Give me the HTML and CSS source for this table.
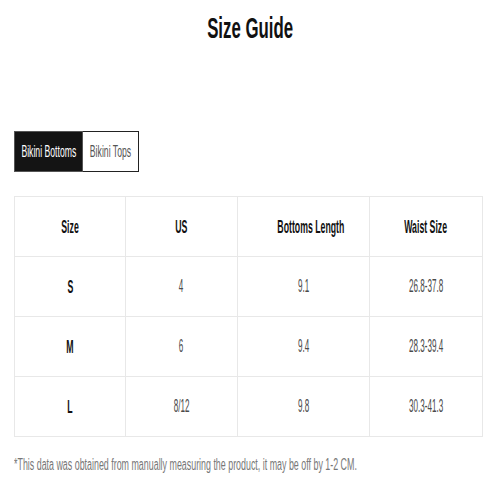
FILE: index.html
```html
<!DOCTYPE html>
<html>
<head>
<meta charset="utf-8">
<link rel="stylesheet" href="styles.css">
</head>
<body>
<div class="page">
  <h1 class="title"><span class="sq sq-title">Size Guide</span></h1>
  <div class="tabs">
    <div class="tab tab-active"><span class="sq sq-tab">Bikini Bottoms</span></div>
    <div class="tab tab-idle"><span class="sq sq-tab">Bikini Tops</span></div>
  </div>
  <table class="sizes">
    <colgroup>
      <col class="c1"><col class="c2"><col class="c3"><col class="c4">
    </colgroup>
    <thead>
      <tr>
        <th><span class="sq sq-th">Size</span></th>
        <th><span class="sq sq-th">US</span></th>
        <th><span class="sq sq-th">Bottoms Length</span></th>
        <th><span class="sq sq-th">Waist Size</span></th>
      </tr>
    </thead>
    <tbody>
      <tr>
        <td class="size"><span class="sq sq-th">S</span></td>
        <td><span class="sq sq-td">4</span></td>
        <td><span class="sq sq-td">9.1</span></td>
        <td><span class="sq sq-td">26.8-37.8</span></td>
      </tr>
      <tr>
        <td class="size"><span class="sq sq-th">M</span></td>
        <td><span class="sq sq-td">6</span></td>
        <td><span class="sq sq-td">9.4</span></td>
        <td><span class="sq sq-td">28.3-39.4</span></td>
      </tr>
      <tr>
        <td class="size"><span class="sq sq-th">L</span></td>
        <td><span class="sq sq-td">8/12</span></td>
        <td><span class="sq sq-td">9.8</span></td>
        <td><span class="sq sq-td">30.3-41.3</span></td>
      </tr>
    </tbody>
  </table>
  <p class="note"><span class="sq sq-note">*This data was obtained from manually measuring the product, it may be off by 1-2 CM.</span></p>
</div>
</body>
</html>
```
FILE: styles.css
```css
html, body {
  margin: 0;
  padding: 0;
  background: #ffffff;
}
body {
  font-family: "Liberation Sans", Arial, sans-serif;
  color: #111;
}
.page {
  width: 500px;
  height: 500px;
  padding: 11px 14px 0 14px;
  box-sizing: border-box;
  overflow: hidden;
}
.sq {
  display: inline-block;
  white-space: nowrap;
  transform-origin: center center;
}
.title {
  margin: 0;
  text-align: center;
  font-size: 29px;
  line-height: 34px;
  font-weight: bold;
  color: #111;
}
.sq-title {
  transform: scaleX(0.58);
}
.tabs {
  display: flex;
  margin-top: 86px;
  height: 41px;
  width: 125px;
}
.tab {
  box-sizing: border-box;
  height: 41px;
  display: flex;
  align-items: center;
  justify-content: center;
  font-size: 17px;
  overflow: hidden;
}
.tab-active {
  width: 69px;
  background: #141414;
  color: #fff;
  border: 1px solid #555;
}
.tab-idle {
  width: 56px;
  background: #fff;
  color: #555;
  border: 1px solid #222;
  border-left: none;
}
.sq-tab {
  transform: scaleX(0.51);
}
.sizes {
  margin-top: 24px;
  border-collapse: collapse;
  table-layout: fixed;
  width: 468px;
}
.c1 { width: 111px; }
.c2 { width: 112px; }
.c3 { width: 132px; }
.c4 { width: 113px; }
.sizes th, .sizes td {
  border: 1px solid #e8e8e8;
  height: 59px;
  padding: 0;
  text-align: center;
  vertical-align: middle;
  overflow: hidden;
}
.sizes th {
  font-size: 19px;
  font-weight: bold;
  color: #111;
}
.sizes td {
  font-size: 18px;
  color: #4a4a4a;
}
.sizes td.size {
  color: #111;
  font-weight: bold;
  font-size: 19px;
}
.sq-th {
  transform: scaleX(0.46);
}
.sq-td {
  transform: scaleX(0.45);
}
.note {
  margin: 18px 0 0 0;
  font-size: 16px;
  line-height: 20px;
  color: #777;
  white-space: nowrap;
  overflow: hidden;
}
.sq-note {
  transform-origin: left center;
  transform: scaleX(0.555);
}
```
